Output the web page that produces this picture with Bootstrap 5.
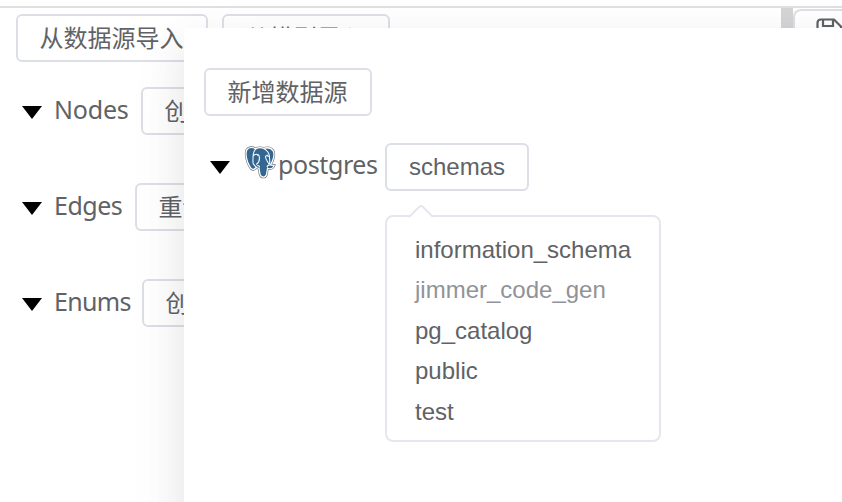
<!DOCTYPE html>
<html lang="zh-CN">
<head>
<meta charset="utf-8">
<title>Data source import</title>
<link href="https://cdn.jsdelivr.net/npm/bootstrap@5.3.0/dist/css/bootstrap.min.css" rel="stylesheet">
<style>
body{font-family:"Noto Sans","Noto Sans CJK SC",sans-serif;font-size:25px;color:#606266;background:#fff}
.tool-btn{--bs-btn-font-size:24px;--bs-btn-line-height:24px;--bs-btn-border-width:2px;--bs-btn-border-radius:6px;--bs-btn-color:#606266;--bs-btn-bg:#fff;--bs-btn-border-color:#dcdfe6;font-family:"Liberation Sans","Noto Sans CJK SC",sans-serif;font-weight:400;height:48px;padding:11px 22px 9px 21.5px;white-space:nowrap;flex:none}
.tools .tool-btn,.dlg>.tool-btn{padding-right:22.5px}
.topline{height:8px;border-bottom:2px solid #e0e0e0;flex:none}
.side{width:781px;padding:6px 0 0 16px}
.tools{gap:14px;margin-bottom:25px}
.tree-row{height:48px;padding-left:6px}
.tree-row .lbl{line-height:42px;margin-left:12px;letter-spacing:-.2px;padding-bottom:4px}
.lbl-nodes{width:87px}.lbl-edges{width:81px}.lbl-enums{width:88px}
.tree-row .lbl-edges{letter-spacing:-.5px}
.tree-row .lbl-enums{letter-spacing:-.7px}
.caret{width:20px;height:13px;flex:none;margin-top:3px}
.splitter{width:12px;background:#d4d4d4}
.pane{border:2px solid #dcdfe6;border-right:0;border-radius:8px 0 0 0;padding:7px 0 0 20px;margin-top:1px}
.pane svg{display:block}
.dlg{left:184px;top:28px;width:700px;height:600px;background:#fff;border-radius:4px;padding:40px 20px;box-shadow:0 24px 64px 8px rgba(0,0,0,.04),0 16px 40px rgba(0,0,0,.08)}
.source{margin-top:27px;height:48px;padding-left:6px}
.source .caret{margin-top:0}
.elephant{width:32px;height:33px;margin:-9px 1px 0 14px;flex:none}
.source .lbl{line-height:40px;width:108px;padding-left:1px;margin-top:-7px;letter-spacing:-.4px}
.source .tool-btn{padding:10px 21px;width:144px}
.schemas{margin:24px 0 0 181px;width:276px;height:227px;border:2px solid #e4e7ed;border-radius:8px;padding:13px 28px;font:24px/40.4px "Liberation Sans",sans-serif}
.arrow-tip{left:21px;top:-13px;width:26px;height:14px}
.dim{color:#909399}
</style>
</head>
<body>
<div class="vh-100 overflow-hidden position-relative d-flex flex-column">
<div class="topline"></div>
<div class="d-flex flex-grow-1">
  <main class="side flex-shrink-0">
    <div class="tools d-flex"><button class="btn tool-btn">从数据源导入</button><button class="btn tool-btn">从模型导入</button></div>
    <div class="tree-row d-flex align-items-center mb-5"><svg class="caret" viewBox="0 0 20 13"><path d="M0 0h20L10 13z"/></svg><span class="lbl lbl-nodes">Nodes</span><button class="btn tool-btn">创建</button></div>
    <div class="tree-row d-flex align-items-center mb-5"><svg class="caret" viewBox="0 0 20 13"><path d="M0 0h20L10 13z"/></svg><span class="lbl lbl-edges">Edges</span><button class="btn tool-btn">重设</button></div>
    <div class="tree-row d-flex align-items-center"><svg class="caret" viewBox="0 0 20 13"><path d="M0 0h20L10 13z"/></svg><span class="lbl lbl-enums">Enums</span><button class="btn tool-btn">创建</button></div>
  </main>
  <div class="splitter flex-shrink-0"></div>
  <div class="pane flex-grow-1"><svg width="30" height="28" viewBox="0 0 30 28" fill="none" stroke="#606266" stroke-width="2.200"><path d="M2.500 26V5q0-3.500 3.500-3.500h13l7 7V24q0 2-2 2H4.500q-2 0-2-2zM8 2v6h10V2"/></svg></div>
</div>
<section class="dlg position-absolute">
  <button class="btn tool-btn d-block">新增数据源</button>
  <div class="source d-flex align-items-center">
    <svg class="caret" viewBox="0 0 20 13"><path d="M0 0h20L10 13z"/></svg>
    <svg class="elephant" viewBox="0 0 34 34" preserveAspectRatio="none">
      <path d="M12.500 3C9 1 5 1 3 4c-2 4 0 12 3 17 2 4 5 4 7 1 1 1 2 1 3 1l1 6c1 4 6 4 7 0l1-6c3 1 6 0 7-3l-4-.5c3-4 5-11 3-14.500C28.500 1.500 24 1.500 21 2.500c-3-1-6-1-8.500.5z" fill="#336791" stroke="#6c7075" stroke-width="2.600"/>
      <path d="M12.500 3C9 1 5 1 3 4c-2 4 0 12 3 17 2 4 5 4 7 1 1 1 2 1 3 1l1 6c1 4 6 4 7 0l1-6c3 1 6 0 7-3l-4-.5c3-4 5-11 3-14.500C28.500 1.500 24 1.500 21 2.500c-3-1-6-1-8.500.5z" fill="#336791" stroke="#fff" stroke-width="1.300"/>
      <path d="M12.500 3C9.500 6 9.500 10 9.500 17c0 2 2 3 3.500 5M10 10c2-2 5-2 6 0 1 4 0 7-3 9M16 22c1-1 0-2-2-2M21 2.500c4 2 6 6 6 8-2 0-3-1-4 0-1 2 2 5 4 9M27 10.500c0 3 1 5 0 8M25 22c-1-1 0-2 2-2.500" stroke="#fff" stroke-width="1.100" fill="none"/>
      <path d="M14 9.500h1.500M24 9.500h1.500" stroke="#fff" stroke-width="1.200"/>
    </svg>
    <span class="lbl">postgres</span><button class="btn tool-btn">schemas</button>
  </div>
  <div class="schemas position-relative">
    <svg class="arrow-tip position-absolute" viewBox="0 0 26 14"><path d="M1 14L11 3q2-2 4 0l10 11z" fill="#fff"/><path d="M1 13L11 3q2-2 4 0l10 10" fill="none" stroke="#e4e7ed" stroke-width="2"/></svg>
    <div>information_schema</div><div class="dim">jimmer_code_gen</div><div>pg_catalog</div><div>public</div><div>test</div>
  </div>
</section>
</div>
<script src="https://cdn.jsdelivr.net/npm/bootstrap@5.3.0/dist/js/bootstrap.bundle.min.js"></script>
</body>
</html>
